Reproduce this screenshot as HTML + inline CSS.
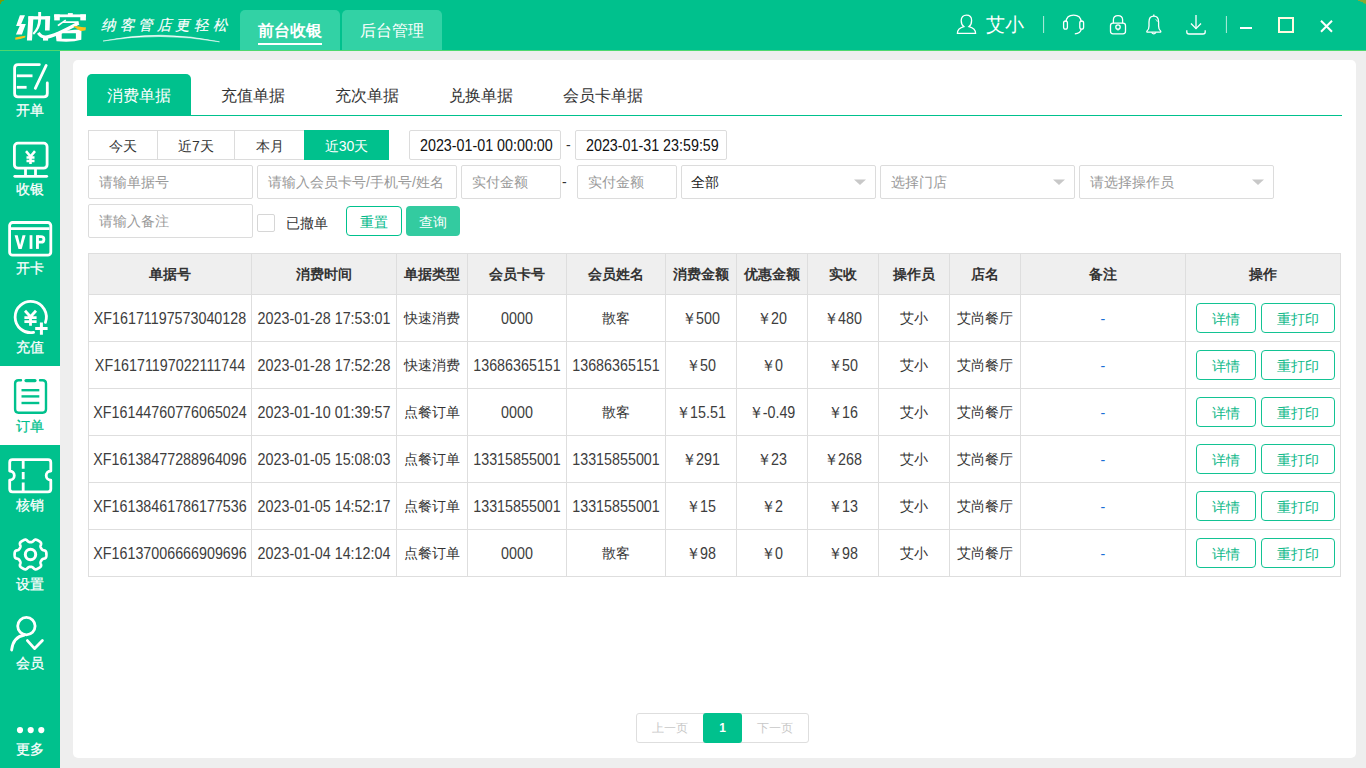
<!DOCTYPE html>
<html><head><meta charset="utf-8">
<style>
*{box-sizing:border-box;margin:0;padding:0}
html,body{width:1366px;height:768px;overflow:hidden;background:#eeeeee;font-family:"Liberation Sans",sans-serif;color:#333}
.abs{position:absolute}
#hdr{position:absolute;left:0;top:0;width:1366px;height:50px;background:#00c18d}
#hline{position:absolute;left:0;top:50px;width:1366px;height:1px;background:#4fd86e}
#side{position:absolute;left:0;top:51px;width:60px;height:717px;background:#00c18d}
#sideb{position:absolute;left:60px;top:51px;width:1px;height:717px;background:#fbeff3}
.si{position:absolute;left:0;width:60px;height:79px}
.si .lb{position:absolute;left:0;width:60px;text-align:center;font-size:14px;line-height:16px;color:#fff;white-space:nowrap}
.si svg{position:absolute;left:0;top:0}
#card{position:absolute;left:73px;top:60px;width:1283px;height:698px;background:#fff;border-radius:5px}
.t{position:absolute;white-space:nowrap;line-height:20px}
.htab{position:absolute;top:10px;height:40px;background:#32d2a5;border-radius:5px 5px 0 0;color:#fff;font-size:16px;text-align:center;line-height:42px}
.inp{border:1px solid #dcdcdc;border-radius:2px}
.ph{font-size:14px;color:#999}
.hl{left:88px;width:1253px;height:1px;background:#dedede}
.vl{top:253px;width:1px;height:324px;background:#dedede}
.th{text-align:center;font-size:14px;font-weight:bold;color:#333}
.td{text-align:center;font-size:14.3px;color:#333}
.ob{height:30px;border:1px solid #13c393;border-radius:4px;color:#0fb98a;font-size:14px;line-height:30px;text-align:center}
.num{transform:scaleY(1.1);transform-origin:50% 5px}
.td.num{color:#3d3d3d}
</style></head>
<body>
<div id="hdr"></div>
<div id="hline"></div>
<div id="side"></div>

<div id="card"></div>


<div class="abs" style="left:0;top:366px;width:60px;height:79px;background:#fff"></div>
<svg class="abs" style="left:0;top:0" width="60" height="768" viewBox="0 0 60 768" fill="none" stroke="#fff" stroke-width="2.8" stroke-linecap="round" stroke-linejoin="round">
 <!-- 开单 -->
 <path d="M39.4,64.6 L18,64.6 Q14.6,64.6 14.6,68 L14.6,93.4 Q14.6,96.8 18,96.8 L43.9,96.8 Q47.3,96.8 47.3,93.4 L47.3,83"/>
 <line x1="16.8" y1="75.8" x2="32.5" y2="75.8" stroke-linecap="butt"/>
 <line x1="16.8" y1="87.3" x2="26.6" y2="87.3" stroke-linecap="butt"/>
 <line x1="46.2" y1="65.4" x2="35.3" y2="88.3"/>
 <!-- 收银 -->
 <rect x="14.4" y="143.2" width="32.7" height="25" rx="3.5"/>
 <line x1="25.5" y1="169" x2="25.5" y2="175" stroke-linecap="butt"/>
 <line x1="35.5" y1="169" x2="35.5" y2="175" stroke-linecap="butt"/>
 <line x1="14.8" y1="176.3" x2="46.7" y2="176.3"/>
 <path d="M26,151.2 L30.5,156.5 L35,151.2 M26.5,157.5 L34.5,157.5 M26.5,161 L34.5,161 M30.5,156.5 L30.5,164" stroke-width="2.6" stroke-linecap="butt"/>
 <!-- 开卡 VIP -->
 <rect x="9.6" y="222.5" width="41.2" height="32.7" rx="3"/>
 <line x1="11" y1="228.6" x2="49.4" y2="228.6" stroke-linecap="butt"/>
 <!-- 充值 -->
 <path d="M45.4,322.4 A15.6,15.6 0 1 0 33.6,332.4"/>
 <path d="M35.2,328.6 L47.6,328.6 M41.4,322.4 L41.4,334.8" stroke-linecap="butt" stroke-width="3"/>
 <path d="M25,310.8 L30.5,316.8 L36,310.8 M24.4,317.6 L36.6,317.6 M24.4,321.6 L36.6,321.6 M30.5,316.8 L30.5,325.8" stroke-width="2.8" stroke-linecap="butt"/>
 <!-- 订单 -->
 <g stroke="#00c18d" stroke-width="2.4">
  <path d="M21,380.2 L18.5,380.2 Q15.1,380.2 15.1,383.6 L15.1,409.3 Q15.1,412.7 18.5,412.7 L42.6,412.7 Q46,412.7 46,409.3 L46,383.6 Q46,380.2 42.6,380.2 L40,380.2"/>
  <line x1="26" y1="380.6" x2="35" y2="380.6" stroke-width="3.2"/>
  <line x1="21.5" y1="390.2" x2="39.3" y2="390.2" stroke-linecap="butt"/>
  <line x1="21.5" y1="396.4" x2="39.3" y2="396.4" stroke-linecap="butt"/>
  <line x1="21.5" y1="403" x2="39.3" y2="403" stroke-linecap="butt"/>
 </g>
 <!-- 核销 -->
 <path d="M12.5,459.6 L48,459.6 Q50.8,459.6 50.8,462.4 L50.8,471 A4.6,4.6 0 0 0 50.8,480.2 L50.8,489 Q50.8,491.8 48,491.8 L12.5,491.8 Q9.7,491.8 9.7,489 L9.7,480.2 A4.6,4.6 0 0 0 9.7,471 L9.7,462.4 Q9.7,459.6 12.5,459.6 Z"/>
 <path d="M23.2,460 L23.2,468.7 M23.2,471.9 L23.2,479.2 M23.2,482.4 L23.2,492" stroke-linecap="butt"/>
 <!-- 设置 gear -->
 <path d="M46.40,554.50 L46.40,554.78 L46.39,555.05 L46.37,555.33 L46.35,555.61 L46.33,555.88 L46.29,556.16 L46.25,556.43 L46.20,556.71 L46.13,556.98 L46.04,557.24 L45.93,557.50 L45.77,557.75 L45.57,557.98 L45.30,558.19 L44.95,558.37 L44.53,558.52 L44.06,558.64 L43.60,558.76 L43.20,558.87 L42.85,558.99 L42.56,559.13 L42.32,559.28 L42.13,559.44 L41.96,559.60 L41.82,559.78 L41.69,559.96 L41.57,560.14 L41.46,560.33 L41.35,560.51 L41.24,560.70 L41.13,560.89 L41.03,561.08 L40.92,561.27 L40.82,561.46 L40.73,561.67 L40.65,561.88 L40.59,562.10 L40.55,562.35 L40.54,562.63 L40.56,562.94 L40.63,563.31 L40.74,563.72 L40.87,564.17 L41.00,564.64 L41.08,565.08 L41.09,565.47 L41.05,565.81 L40.95,566.10 L40.81,566.36 L40.64,566.59 L40.46,566.80 L40.26,566.99 L40.05,567.17 L39.83,567.35 L39.61,567.51 L39.39,567.68 L39.16,567.83 L38.92,567.98 L38.69,568.13 L38.45,568.27 L38.21,568.41 L37.96,568.54 L37.72,568.66 L37.47,568.78 L37.21,568.90 L36.96,569.01 L36.70,569.11 L36.44,569.20 L36.17,569.27 L35.90,569.33 L35.62,569.36 L35.32,569.35 L35.02,569.29 L34.70,569.16 L34.37,568.95 L34.03,568.66 L33.69,568.31 L33.36,567.98 L33.06,567.68 L32.78,567.44 L32.52,567.25 L32.27,567.12 L32.04,567.04 L31.81,566.98 L31.59,566.94 L31.37,566.92 L31.15,566.91 L30.93,566.90 L30.72,566.90 L30.50,566.90 L30.28,566.90 L30.07,566.90 L29.85,566.91 L29.63,566.92 L29.41,566.94 L29.19,566.98 L28.96,567.04 L28.73,567.12 L28.48,567.25 L28.22,567.44 L27.94,567.68 L27.64,567.98 L27.31,568.31 L26.97,568.66 L26.63,568.95 L26.30,569.16 L25.98,569.29 L25.68,569.35 L25.38,569.36 L25.10,569.33 L24.83,569.27 L24.56,569.20 L24.30,569.11 L24.04,569.01 L23.79,568.90 L23.53,568.78 L23.28,568.66 L23.04,568.54 L22.79,568.41 L22.55,568.27 L22.31,568.13 L22.08,567.98 L21.84,567.83 L21.61,567.68 L21.39,567.51 L21.17,567.35 L20.95,567.17 L20.74,566.99 L20.54,566.80 L20.36,566.59 L20.19,566.36 L20.05,566.10 L19.95,565.81 L19.91,565.47 L19.92,565.08 L20.00,564.64 L20.13,564.17 L20.26,563.72 L20.37,563.31 L20.44,562.94 L20.46,562.63 L20.45,562.35 L20.41,562.10 L20.35,561.88 L20.27,561.67 L20.18,561.46 L20.08,561.27 L19.97,561.08 L19.87,560.89 L19.76,560.70 L19.65,560.51 L19.54,560.33 L19.43,560.14 L19.31,559.96 L19.18,559.78 L19.04,559.60 L18.87,559.44 L18.68,559.28 L18.44,559.13 L18.15,558.99 L17.80,558.87 L17.40,558.76 L16.94,558.64 L16.47,558.52 L16.05,558.37 L15.70,558.19 L15.43,557.98 L15.23,557.75 L15.07,557.50 L14.96,557.24 L14.87,556.98 L14.80,556.71 L14.75,556.43 L14.71,556.16 L14.67,555.88 L14.65,555.61 L14.63,555.33 L14.61,555.05 L14.60,554.78 L14.60,554.50 L14.60,554.22 L14.61,553.95 L14.63,553.67 L14.65,553.39 L14.67,553.12 L14.71,552.84 L14.75,552.57 L14.80,552.29 L14.87,552.02 L14.96,551.76 L15.07,551.50 L15.23,551.25 L15.43,551.02 L15.70,550.81 L16.05,550.63 L16.47,550.48 L16.94,550.36 L17.40,550.24 L17.80,550.13 L18.15,550.01 L18.44,549.87 L18.68,549.72 L18.87,549.56 L19.04,549.40 L19.18,549.22 L19.31,549.04 L19.43,548.86 L19.54,548.67 L19.65,548.49 L19.76,548.30 L19.87,548.11 L19.97,547.92 L20.08,547.73 L20.18,547.54 L20.27,547.33 L20.35,547.12 L20.41,546.90 L20.45,546.65 L20.46,546.37 L20.44,546.06 L20.37,545.69 L20.26,545.28 L20.13,544.83 L20.00,544.36 L19.92,543.92 L19.91,543.53 L19.95,543.19 L20.05,542.90 L20.19,542.64 L20.36,542.41 L20.54,542.20 L20.74,542.01 L20.95,541.83 L21.17,541.65 L21.39,541.49 L21.61,541.32 L21.84,541.17 L22.08,541.02 L22.31,540.87 L22.55,540.73 L22.79,540.59 L23.04,540.46 L23.28,540.34 L23.53,540.22 L23.79,540.10 L24.04,539.99 L24.30,539.89 L24.56,539.80 L24.83,539.73 L25.10,539.67 L25.38,539.64 L25.68,539.65 L25.98,539.71 L26.30,539.84 L26.63,540.05 L26.97,540.34 L27.31,540.69 L27.64,541.02 L27.94,541.32 L28.22,541.56 L28.48,541.75 L28.73,541.88 L28.96,541.96 L29.19,542.02 L29.41,542.06 L29.63,542.08 L29.85,542.09 L30.07,542.10 L30.28,542.10 L30.50,542.10 L30.72,542.10 L30.93,542.10 L31.15,542.09 L31.37,542.08 L31.59,542.06 L31.81,542.02 L32.04,541.96 L32.27,541.88 L32.52,541.75 L32.78,541.56 L33.06,541.32 L33.36,541.02 L33.69,540.69 L34.03,540.34 L34.37,540.05 L34.70,539.84 L35.02,539.71 L35.32,539.65 L35.62,539.64 L35.90,539.67 L36.17,539.73 L36.44,539.80 L36.70,539.89 L36.96,539.99 L37.21,540.10 L37.47,540.22 L37.72,540.34 L37.96,540.46 L38.21,540.59 L38.45,540.73 L38.69,540.87 L38.92,541.02 L39.16,541.17 L39.39,541.32 L39.61,541.49 L39.83,541.65 L40.05,541.83 L40.26,542.01 L40.46,542.20 L40.64,542.41 L40.81,542.64 L40.95,542.90 L41.05,543.19 L41.09,543.53 L41.08,543.92 L41.00,544.36 L40.87,544.83 L40.74,545.28 L40.63,545.69 L40.56,546.06 L40.54,546.37 L40.55,546.65 L40.59,546.90 L40.65,547.12 L40.73,547.33 L40.82,547.54 L40.92,547.73 L41.03,547.92 L41.13,548.11 L41.24,548.30 L41.35,548.49 L41.46,548.67 L41.57,548.86 L41.69,549.04 L41.82,549.22 L41.96,549.40 L42.13,549.56 L42.32,549.72 L42.56,549.87 L42.85,550.01 L43.20,550.13 L43.60,550.24 L44.06,550.36 L44.53,550.48 L44.95,550.63 L45.30,550.81 L45.57,551.02 L45.77,551.25 L45.93,551.50 L46.04,551.76 L46.13,552.02 L46.20,552.29 L46.25,552.57 L46.29,552.84 L46.33,553.12 L46.35,553.39 L46.37,553.67 L46.39,553.95 L46.40,554.22 L46.40,554.50 Z" stroke-width="2.7"/>
 <circle cx="30.5" cy="554.5" r="5.2" stroke-width="3"/>
 <!-- 会员 -->
 <circle cx="26.4" cy="626.1" r="8.7"/>
 <path d="M24.5,635 Q13,637 11.6,650"/>
 <path d="M27.4,640.6 L34.6,648.6 L42.4,640.6"/>
</svg>
<svg class="abs" style="left:0;top:0" width="60" height="768" viewBox="0 0 60 768" fill="#fff">
 <circle cx="20" cy="730.1" r="3.1"/><circle cx="30.7" cy="730.1" r="3.1"/><circle cx="41.3" cy="730.1" r="3.1"/>
 <polygon points="14.6,235.2 17.7,235.2 20.1,245 22.5,235.2 25.6,235.2 21.7,248.9 18.5,248.9"/><rect x="29.6" y="235.2" width="2.8" height="13.7"/><rect x="36" y="235.2" width="2.9" height="13.7"/><path d="M37.4,236.6 L41,236.6 Q43.9,236.6 43.9,239.4 Q43.9,242.2 41,242.2 L37.4,242.2" fill="none" stroke="#fff" stroke-width="2.8"/>
</svg>
<div class="t" style="left:0;width:60px;text-align:center;top:100px;font-size:14px;-webkit-text-stroke:0.25px currentColor;color:#fff">开单</div>
<div class="t" style="left:0;width:60px;text-align:center;top:179px;font-size:14px;-webkit-text-stroke:0.25px currentColor;color:#fff">收银</div>
<div class="t" style="left:0;width:60px;text-align:center;top:258px;font-size:14px;-webkit-text-stroke:0.25px currentColor;color:#fff">开卡</div>
<div class="t" style="left:0;width:60px;text-align:center;top:337px;font-size:14px;-webkit-text-stroke:0.25px currentColor;color:#fff">充值</div>
<div class="t" style="left:0;width:60px;text-align:center;top:416px;font-size:14px;-webkit-text-stroke:0.25px currentColor;color:#00c18d">订单</div>
<div class="t" style="left:0;width:60px;text-align:center;top:495px;font-size:14px;-webkit-text-stroke:0.25px currentColor;color:#fff">核销</div>
<div class="t" style="left:0;width:60px;text-align:center;top:574px;font-size:14px;-webkit-text-stroke:0.25px currentColor;color:#fff">设置</div>
<div class="t" style="left:0;width:60px;text-align:center;top:653px;font-size:14px;-webkit-text-stroke:0.25px currentColor;color:#fff">会员</div>
<div class="t" style="left:0;width:60px;text-align:center;top:739px;font-size:14px;-webkit-text-stroke:0.25px currentColor;color:#fff">更多</div>


<!-- tabs -->
<div class="abs" style="left:87px;top:74px;width:104px;height:42px;background:#00c18d;border-radius:5px 5px 0 0"></div>
<div class="abs" style="left:87px;top:115px;width:1255px;height:1px;background:#00c18d"></div>
<div class="t" style="left:107px;top:85px;font-size:16px;line-height:22px;color:#fff">消费单据</div>
<div class="t" style="left:221px;top:85px;font-size:16px;line-height:22px">充值单据</div>
<div class="t" style="left:335px;top:85px;font-size:16px;line-height:22px">充次单据</div>
<div class="t" style="left:449px;top:85px;font-size:16px;line-height:22px">兑换单据</div>
<div class="t" style="left:563px;top:85px;font-size:16px;line-height:22px">会员卡单据</div>
<!-- date seg -->
<div class="abs" style="left:88px;top:130px;width:301px;height:30px;border:1px solid #dcdcdc"></div>
<div class="abs" style="left:157px;top:130px;width:1px;height:30px;background:#dcdcdc"></div>
<div class="abs" style="left:234px;top:130px;width:1px;height:30px;background:#dcdcdc"></div>
<div class="abs" style="left:304px;top:130px;width:85px;height:30px;background:#00c18d"></div>
<div class="t" style="left:88px;width:69px;text-align:center;top:136px;font-size:14px">今天</div>
<div class="t" style="left:158px;width:76px;text-align:center;top:136px;font-size:14px">近7天</div>
<div class="t" style="left:235px;width:69px;text-align:center;top:136px;font-size:14px">本月</div>
<div class="t" style="left:304px;width:85px;text-align:center;top:136px;font-size:14px;color:#fff">近30天</div>
<div class="abs inp" style="left:409px;top:130px;width:152px;height:30px"></div>
<div class="t num" style="left:420px;top:135px;font-size:14.3px;color:#111">2023-01-01 00:00:00</div>
<div class="t" style="left:566px;top:135px;font-size:14px">-</div>
<div class="abs inp" style="left:575px;top:130px;width:152px;height:30px"></div>
<div class="t num" style="left:586px;top:135px;font-size:14.3px;color:#111">2023-01-31 23:59:59</div>
<!-- row 2 -->
<div class="abs inp" style="left:88px;top:165px;width:165px;height:34px"></div>
<div class="t ph" style="left:99px;top:172px">请输单据号</div>
<div class="abs inp" style="left:257px;top:165px;width:200px;height:34px"></div>
<div class="t ph" style="left:268px;top:172px">请输入会员卡号/手机号/姓名</div>
<div class="abs inp" style="left:461px;top:165px;width:100px;height:34px"></div>
<div class="t ph" style="left:472px;top:172px">实付金额</div>
<div class="t" style="left:562px;top:172px;font-size:14px">-</div>
<div class="abs inp" style="left:577px;top:165px;width:100px;height:34px"></div>
<div class="t ph" style="left:588px;top:172px">实付金额</div>
<div class="abs inp" style="left:681px;top:165px;width:195px;height:34px"></div>
<div class="t" style="left:691px;top:172px;font-size:14px;color:#222">全部</div>
<div class="abs inp" style="left:880px;top:165px;width:195px;height:34px"></div>
<div class="t ph" style="left:891px;top:172px">选择门店</div>
<div class="abs inp" style="left:1079px;top:165px;width:195px;height:34px"></div>
<div class="t ph" style="left:1090px;top:172px">请选择操作员</div>
<svg class="abs" style="left:0;top:0" width="1366" height="200" fill="#c8c8c8">
 <path d="M854,179.5 L866,179.5 L860,185 Z"/>
 <path d="M1053,179.5 L1065,179.5 L1059,185 Z"/>
 <path d="M1252,179.5 L1264,179.5 L1258,185 Z"/>
</svg>
<!-- row 3 -->
<div class="abs inp" style="left:88px;top:204px;width:165px;height:34px"></div>
<div class="t ph" style="left:99px;top:211px">请输入备注</div>
<div class="abs" style="left:257px;top:214px;width:18px;height:18px;border:1px solid #d6d6d6;border-radius:2px"></div>
<div class="t" style="left:286px;top:213px;font-size:14px">已撤单</div>
<div class="abs" style="left:346px;top:206px;width:56px;height:30px;border:1px solid #00c18d;border-radius:4px"></div>
<div class="t" style="left:346px;width:56px;text-align:center;top:212px;font-size:14px;color:#00b98a">重置</div>
<div class="abs" style="left:406px;top:206px;width:54px;height:30px;background:#33cba0;border-radius:4px"></div>
<div class="t" style="left:406px;width:54px;text-align:center;top:212px;font-size:14px;color:#fff">查询</div>

<div class="abs" style="left:88px;top:254px;width:1252px;height:40px;background:#efefef"></div>
<div class="abs hl" style="top:253px"></div>
<div class="abs hl" style="top:294px"></div>
<div class="abs hl" style="top:341px"></div>
<div class="abs hl" style="top:388px"></div>
<div class="abs hl" style="top:435px"></div>
<div class="abs hl" style="top:482px"></div>
<div class="abs hl" style="top:529px"></div>
<div class="abs hl" style="top:576px"></div>
<div class="abs vl" style="left:88px"></div>
<div class="abs vl" style="left:251px"></div>
<div class="abs vl" style="left:396px"></div>
<div class="abs vl" style="left:467px"></div>
<div class="abs vl" style="left:566px"></div>
<div class="abs vl" style="left:665px"></div>
<div class="abs vl" style="left:736px"></div>
<div class="abs vl" style="left:807px"></div>
<div class="abs vl" style="left:878px"></div>
<div class="abs vl" style="left:949px"></div>
<div class="abs vl" style="left:1020px"></div>
<div class="abs vl" style="left:1185px"></div>
<div class="abs vl" style="left:1340px"></div>
<div class="t th" style="left:89px;width:162px;top:264px">单据号</div>
<div class="t th" style="left:252px;width:144px;top:264px">消费时间</div>
<div class="t th" style="left:397px;width:70px;top:264px">单据类型</div>
<div class="t th" style="left:468px;width:98px;top:264px">会员卡号</div>
<div class="t th" style="left:567px;width:98px;top:264px">会员姓名</div>
<div class="t th" style="left:666px;width:70px;top:264px">消费金额</div>
<div class="t th" style="left:737px;width:70px;top:264px">优惠金额</div>
<div class="t th" style="left:808px;width:70px;top:264px">实收</div>
<div class="t th" style="left:879px;width:70px;top:264px">操作员</div>
<div class="t th" style="left:950px;width:70px;top:264px">店名</div>
<div class="t th" style="left:1021px;width:164px;top:264px">备注</div>
<div class="t th" style="left:1186px;width:154px;top:264px">操作</div>
<div class="t td num" style="left:89px;width:162px;top:308px">XF16171197573040128</div>
<div class="t td num" style="left:252px;width:144px;top:308px">2023-01-28 17:53:01</div>
<div class="t td" style="left:397px;width:70px;top:308px">快速消费</div>
<div class="t td num" style="left:468px;width:98px;top:308px">0000</div>
<div class="t td" style="left:567px;width:98px;top:308px">散客</div>
<div class="t td num" style="left:666px;width:70px;top:308px">￥500</div>
<div class="t td num" style="left:737px;width:70px;top:308px">￥20</div>
<div class="t td num" style="left:808px;width:70px;top:308px">￥480</div>
<div class="t td" style="left:879px;width:70px;top:308px">艾小</div>
<div class="t td" style="left:950px;width:70px;top:308px">艾尚餐厅</div>
<div class="t td" style="left:1021px;width:164px;top:309px;color:#1a6fd6">-</div>
<div class="abs ob" style="left:1196px;top:303px;width:60px">详情</div>
<div class="abs ob" style="left:1261px;top:303px;width:74px">重打印</div>
<div class="t td num" style="left:89px;width:162px;top:355px">XF16171197022111744</div>
<div class="t td num" style="left:252px;width:144px;top:355px">2023-01-28 17:52:28</div>
<div class="t td" style="left:397px;width:70px;top:355px">快速消费</div>
<div class="t td num" style="left:468px;width:98px;top:355px">13686365151</div>
<div class="t td num" style="left:567px;width:98px;top:355px">13686365151</div>
<div class="t td num" style="left:666px;width:70px;top:355px">￥50</div>
<div class="t td num" style="left:737px;width:70px;top:355px">￥0</div>
<div class="t td num" style="left:808px;width:70px;top:355px">￥50</div>
<div class="t td" style="left:879px;width:70px;top:355px">艾小</div>
<div class="t td" style="left:950px;width:70px;top:355px">艾尚餐厅</div>
<div class="t td" style="left:1021px;width:164px;top:356px;color:#1a6fd6">-</div>
<div class="abs ob" style="left:1196px;top:350px;width:60px">详情</div>
<div class="abs ob" style="left:1261px;top:350px;width:74px">重打印</div>
<div class="t td num" style="left:89px;width:162px;top:402px">XF16144760776065024</div>
<div class="t td num" style="left:252px;width:144px;top:402px">2023-01-10 01:39:57</div>
<div class="t td" style="left:397px;width:70px;top:402px">点餐订单</div>
<div class="t td num" style="left:468px;width:98px;top:402px">0000</div>
<div class="t td" style="left:567px;width:98px;top:402px">散客</div>
<div class="t td num" style="left:666px;width:70px;top:402px">￥15.51</div>
<div class="t td num" style="left:737px;width:70px;top:402px">￥-0.49</div>
<div class="t td num" style="left:808px;width:70px;top:402px">￥16</div>
<div class="t td" style="left:879px;width:70px;top:402px">艾小</div>
<div class="t td" style="left:950px;width:70px;top:402px">艾尚餐厅</div>
<div class="t td" style="left:1021px;width:164px;top:403px;color:#1a6fd6">-</div>
<div class="abs ob" style="left:1196px;top:397px;width:60px">详情</div>
<div class="abs ob" style="left:1261px;top:397px;width:74px">重打印</div>
<div class="t td num" style="left:89px;width:162px;top:449px">XF16138477288964096</div>
<div class="t td num" style="left:252px;width:144px;top:449px">2023-01-05 15:08:03</div>
<div class="t td" style="left:397px;width:70px;top:449px">点餐订单</div>
<div class="t td num" style="left:468px;width:98px;top:449px">13315855001</div>
<div class="t td num" style="left:567px;width:98px;top:449px">13315855001</div>
<div class="t td num" style="left:666px;width:70px;top:449px">￥291</div>
<div class="t td num" style="left:737px;width:70px;top:449px">￥23</div>
<div class="t td num" style="left:808px;width:70px;top:449px">￥268</div>
<div class="t td" style="left:879px;width:70px;top:449px">艾小</div>
<div class="t td" style="left:950px;width:70px;top:449px">艾尚餐厅</div>
<div class="t td" style="left:1021px;width:164px;top:450px;color:#1a6fd6">-</div>
<div class="abs ob" style="left:1196px;top:444px;width:60px">详情</div>
<div class="abs ob" style="left:1261px;top:444px;width:74px">重打印</div>
<div class="t td num" style="left:89px;width:162px;top:496px">XF16138461786177536</div>
<div class="t td num" style="left:252px;width:144px;top:496px">2023-01-05 14:52:17</div>
<div class="t td" style="left:397px;width:70px;top:496px">点餐订单</div>
<div class="t td num" style="left:468px;width:98px;top:496px">13315855001</div>
<div class="t td num" style="left:567px;width:98px;top:496px">13315855001</div>
<div class="t td num" style="left:666px;width:70px;top:496px">￥15</div>
<div class="t td num" style="left:737px;width:70px;top:496px">￥2</div>
<div class="t td num" style="left:808px;width:70px;top:496px">￥13</div>
<div class="t td" style="left:879px;width:70px;top:496px">艾小</div>
<div class="t td" style="left:950px;width:70px;top:496px">艾尚餐厅</div>
<div class="t td" style="left:1021px;width:164px;top:497px;color:#1a6fd6">-</div>
<div class="abs ob" style="left:1196px;top:491px;width:60px">详情</div>
<div class="abs ob" style="left:1261px;top:491px;width:74px">重打印</div>
<div class="t td num" style="left:89px;width:162px;top:543px">XF16137006666909696</div>
<div class="t td num" style="left:252px;width:144px;top:543px">2023-01-04 14:12:04</div>
<div class="t td" style="left:397px;width:70px;top:543px">点餐订单</div>
<div class="t td num" style="left:468px;width:98px;top:543px">0000</div>
<div class="t td" style="left:567px;width:98px;top:543px">散客</div>
<div class="t td num" style="left:666px;width:70px;top:543px">￥98</div>
<div class="t td num" style="left:737px;width:70px;top:543px">￥0</div>
<div class="t td num" style="left:808px;width:70px;top:543px">￥98</div>
<div class="t td" style="left:879px;width:70px;top:543px">艾小</div>
<div class="t td" style="left:950px;width:70px;top:543px">艾尚餐厅</div>
<div class="t td" style="left:1021px;width:164px;top:544px;color:#1a6fd6">-</div>
<div class="abs ob" style="left:1196px;top:538px;width:60px">详情</div>
<div class="abs ob" style="left:1261px;top:538px;width:74px">重打印</div>
<div class="abs" style="left:636px;top:713px;width:173px;height:30px;border:1px solid #dedede;border-radius:3px"></div>
<div class="abs" style="left:703px;top:713px;width:39px;height:30px;background:#00c18d;border-radius:3px"></div>
<div class="t" style="left:637px;width:66px;text-align:center;top:718px;font-size:12px;color:#c8c8c8">上一页</div>
<div class="t" style="left:703px;width:39px;text-align:center;top:718px;font-size:12px;color:#fff;font-weight:bold">1</div>
<div class="t" style="left:742px;width:66px;text-align:center;top:718px;font-size:12px;color:#c8c8c8">下一页</div>
<svg class="abs" style="left:0;top:0" width="1366" height="6">
 <path d="M0,0 L4,0 L4,1 L2,1 L2,2 L1,2 L1,4 L0,4 Z" fill="#7a9c08"/>
 <path d="M1366,0 L1358,0 L1358,1 L1360,1 L1361,2 L1363,2 L1363,3 L1366,4 Z" fill="#8aa830"/>
</svg>
<!-- logo -->
<svg class="abs" style="left:0;top:0" width="240" height="50" viewBox="0 0 240 50">
 <g fill="#fff">
  <polygon points="19.9,15.2 25,15.2 21.2,24.1 25.8,24.1 21.9,34.6 15.9,34.6 19.7,26.1 16.1,26.1"/>
  <polygon points="28.4,16.2 33.5,16.2 32,40.6 26.9,40.6"/>
  <rect x="28.4" y="16.2" width="21.7" height="3.3"/>
  <polygon points="45.3,16.2 50.1,16.2 49.6,30.4 45.0,30.4"/>
  <rect x="38.2" y="12" width="2.9" height="8"/>
  <path d="M38.2,19.4 L41.1,19.4 Q40.8,28 34,34.8 L32.6,33.2 Q38.2,27 38.2,19.4 Z"/>
  <path d="M38.3,32.8 Q41.5,37.4 46,37 Q54,36.6 78.6,23" stroke="#fff" stroke-width="3.2" fill="none"/>
  <rect x="43" y="36.6" width="5.1" height="4"/>
  <rect x="67.9" y="13.1" width="4.9" height="2"/>
  <rect x="54.2" y="14.4" width="31.7" height="2.8"/>
  <rect x="54.2" y="14.4" width="5.6" height="6"/>
  <rect x="80.3" y="14.4" width="5.6" height="6"/>
  <path d="M57.3,25.1 L65.3,19.4 L66.2,20.6 L58.6,26.3 Z"/>
  <path d="M64,21.2 L78.6,21.3 L78.6,23 L62.5,23 Z"/>
  
  <path d="M55.5,33 Q68,29.4 81.5,29.5 L81.3,39.8 Q72,42.6 56.5,41.2 Z M61.7,33.3 L75.9,33.3 L75.9,38.8 L61.7,38.8 Z" fill-rule="evenodd"/>
 </g>
 <g fill="#fcc21b">
  <path d="M15.3,37.6 Q20,36.6 25.5,35.8 L25.2,37.5 Q20,39.3 15.3,39.8 Z"/>
  <path d="M73.7,26.3 Q76,25.5 79,26.6 Q82.5,27.6 85.9,27.2 L85.6,30.3 Q82,31.2 80.3,30.8 Q77,29 73.7,26.8 Z"/>
 </g>
 <text x="101" y="29.5" fill="#fff" stroke="#fff" stroke-width="0.15" font-family="Liberation Serif" font-style="italic" font-size="14.5" letter-spacing="3.6">纳客管店更轻松</text>
 <path d="M103,41 Q160,29 219.5,41.8 Q160,31.6 103,41 Z" fill="#fff" stroke="#fff" stroke-width="0.5"/>
</svg>
<div class="htab" style="left:240px;width:100px;font-weight:bold">前台收银</div>
<div class="abs" style="left:258px;top:43px;width:64px;height:2px;background:#fff"></div>
<div class="htab" style="left:342px;width:100px">后台管理</div>
<!-- right icons -->
<svg class="abs" style="left:940px;top:0" width="426" height="50" viewBox="940 0 426 50" fill="none" stroke="#fff" stroke-width="1.3">
 <path d="M963.8,26.6 C961.8,25 961.2,22.8 961.2,20.4 C961.2,17 963.4,15.2 966.4,15.2 C969.4,15.2 971.6,17 971.6,20.4 C971.6,22.8 971,25 969,26.6 C973.6,27.8 975.6,30.8 975.6,33.4 L957.4,33.4 C957.4,30.8 959.4,27.8 963.8,26.6 Z"/>
 <line x1="1043.6" y1="16" x2="1043.6" y2="33" stroke-width="1" stroke-opacity="0.7"/>
 <path d="M1066,22 Q1066.5,15.2 1073.6,15.2 Q1080.7,15.2 1081.2,22"/>
 <rect x="1063.6" y="21" width="3.8" height="8.2" rx="1.9"/>
 <rect x="1079.8" y="21" width="3.8" height="8.2" rx="1.9"/>
 <path d="M1081.3,29.2 Q1080.5,33.6 1074.8,33.8"/>
 <rect x="1110.5" y="23.2" width="15" height="10.6" rx="2.5"/>
 <path d="M1113.4,23.2 L1113.4,19.8 Q1113.4,15.6 1118,15.6 Q1122.6,15.6 1122.6,19.8 L1122.6,23.2"/>
 <circle cx="1118" cy="27" r="2.2"/>
 <line x1="1118" y1="29.2" x2="1118" y2="30.6"/>
 <path d="M1149,26 L1149,22 Q1149,16.2 1153.8,16.2 Q1158.6,16.2 1158.6,22 L1158.6,26 Q1158.6,29.6 1160.6,31 Q1161.4,32.2 1159.8,32.2 L1147.8,32.2 Q1146.2,32.2 1147,31 Q1149,29.6 1149,26 Z"/>
 <path d="M1151.6,32.4 Q1153.8,35.4 1156,32.4"/>
 <line x1="1153.8" y1="14.6" x2="1153.8" y2="16.2"/>
 <path d="M1155.8,19.4 Q1156.9,20.2 1157.3,21.6" stroke-width="1"/>
 <line x1="1196" y1="15" x2="1196" y2="28.5"/>
 <path d="M1191,23.5 L1196,28.6 L1201,23.5"/>
 <path d="M1186.8,30.3 L1186.8,32 Q1186.8,34 1189,34 L1203,34 Q1205.2,34 1205.2,32 L1205.2,30.3"/>
 <line x1="1226.4" y1="16" x2="1226.4" y2="33" stroke-width="1" stroke-opacity="0.7"/>
 <line x1="1240" y1="28" x2="1252" y2="28" stroke-width="2"/>
 <rect x="1279" y="18" width="14" height="14" stroke-width="2" stroke="#fffbe0"/>
 <path d="M1321,20.7 L1332,31.7 M1332,20.7 L1321,31.7" stroke-width="2"/>
</svg>
<div class="t" style="left:986px;top:14px;font-size:18.5px;line-height:22px;color:#fff">艾小</div>

</body></html>
